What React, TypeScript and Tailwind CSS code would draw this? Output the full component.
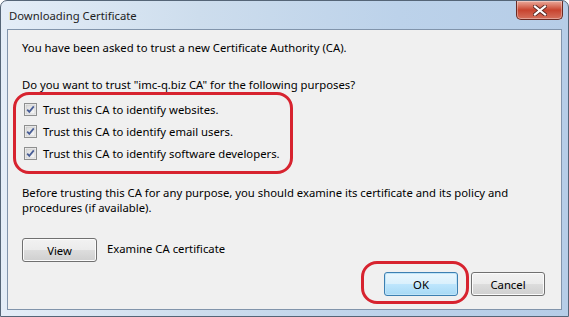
import React from 'react';

const font = "font-['Segoe_UI','Noto_Sans',sans-serif] text-[11.3px] leading-[15px] text-black";

function CheckBox() {
  return (
    <svg width="13" height="13" viewBox="0 0 13 13" className="shrink-0">
      <defs>
        <linearGradient id="cbg" x1="0" y1="0" x2="1" y2="1">
          <stop offset="0" stopColor="#d8d8d8" />
          <stop offset="1" stopColor="#fafafa" />
        </linearGradient>
      </defs>
      <rect x="0.5" y="0.5" width="12" height="12" fill="#f4f4f4" stroke="#8e8f8f" />
      <rect x="2" y="2" width="9" height="9" fill="url(#cbg)" stroke="#c2c2c2" strokeWidth="0.6" />
      <path d="M3.2 6.6 L5.3 8.8 L9.8 3.4" fill="none" stroke="#4a5f97" strokeWidth="1.8" />
    </svg>
  );
}

function Check({ label }: { label: string }) {
  return (
    <div className="h-[22px] flex items-center pl-[16px] gap-[6px]">
      <CheckBox />
      <span>{label}</span>
    </div>
  );
}

function CloseButton() {
  return (
    <div className="w-[47px] h-[19px] rounded-b-[5px] border border-t-0 border-[#6b2a22] bg-gradient-to-b from-[#e9a99b] via-[#c8432e] to-[#d5705c] flex items-center justify-center shadow-[inset_0_0_0_1px_rgba(255,255,255,0.35)]">
      <svg width="14" height="11" viewBox="0 0 14 11">
        <path d="M2 1.5 L12 9.5 M12 1.5 L2 9.5" stroke="#5a2a25" strokeWidth="4" strokeLinecap="square" />
        <path d="M2 1.5 L12 9.5 M12 1.5 L2 9.5" stroke="#ffffff" strokeWidth="2.2" strokeLinecap="square" />
      </svg>
    </div>
  );
}

function WinButton({ label, primary = false, className = '' }: { label: string; primary?: boolean; className?: string }) {
  const look = primary
    ? 'border-[#3c7fb1] bg-[linear-gradient(to_bottom,#eaf6fd_0%,#d9f0fc_50%,#bee6fd_50%,#a7d9f5_100%)] shadow-[inset_0_0_0_1px_#bfe4f8]'
    : 'border-[#707070] bg-[linear-gradient(to_bottom,#f2f2f2_0%,#ebebeb_50%,#dddddd_50%,#cfcfcf_100%)] shadow-[inset_0_0_0_1px_#fbfbfb]';
  return (
    <div className={`h-[24px] w-[74px] rounded-[3px] border flex items-center justify-center ${look} ${className}`}>
      {label}
    </div>
  );
}

export default function App() {
  return (
    <div className={`relative w-[569px] h-[317px] overflow-hidden rounded-t-[7px] border border-[#556577] bg-[linear-gradient(to_right,#e4edf7_0%,#cddded_35%,#bcd2ea_70%,#b6cde7_100%)] flex flex-col ${font}`}>
      {/* title bar */}
      <div className="h-[28px] flex items-start justify-between pl-[8px] pr-[5px]">
        <span className="mt-[7px] text-[#1e1e1e]">Downloading Certificate</span>
        <CloseButton />
      </div>

      {/* client area */}
      <div className="flex-1 mx-[6px] mb-[6px] border border-[#8194ab] bg-[#f0f0f0] flex flex-col pt-[10px]">
        <p className="pl-[14px]">You have been asked to trust a new Certificate Authority (CA).</p>
        <p className="pl-[14px] mt-[22px]">Do you want to trust "imc-q.biz CA" for the following purposes?</p>
        <div className="mt-[6px] flex flex-col">
          <Check label="Trust this CA to identify websites." />
          <Check label="Trust this CA to identify email users." />
          <Check label="Trust this CA to identify software developers." />
        </div>
        <p className="pl-[14px] mt-[21px] whitespace-nowrap">
          Before trusting this CA for any purpose, you should examine its certificate and its policy and
          <br />
          procedures (if available).
        </p>
        <div className="pl-[14px] mt-[23px] flex items-center gap-[10px]">
          <WinButton label="View" className="w-[75px]" />
          <span className="-mt-[3px]">Examine CA certificate</span>
        </div>
        <div className="mt-[10px] pr-[16px] flex justify-end gap-[13px]">
          <WinButton label="OK" primary />
          <WinButton label="Cancel" />
        </div>
      </div>

      {/* red annotations */}
      <div className="absolute left-[12px] top-[91px] w-[280px] h-[82px] rounded-[16px] border-[3px] border-[#d7232f]" />
      <div className="absolute left-[360px] top-[260px] w-[108px] h-[43px] rounded-[16px] border-[3px] border-[#d7232f]" />
    </div>
  );
}
